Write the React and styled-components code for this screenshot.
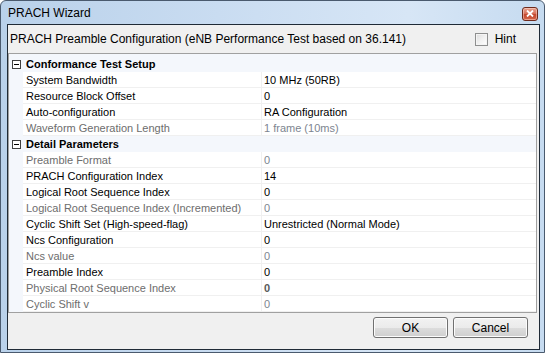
import React from 'react'
import styled, { createGlobalStyle } from 'styled-components'

const GlobalStyle = createGlobalStyle`
  html, body {
    margin: 0;
    padding: 0;
    overflow: hidden;
  }
  body {
    font-family: "Liberation Sans", Arial, sans-serif;
    background: #fff;
  }
`

const Window = styled.div`
  width: 545px;
  height: 353px;
  box-sizing: border-box;
  border: 1px solid #4a5a6e;
  border-radius: 6px 6px 0 0;
  background: linear-gradient(to right, #b9d1ea 0%, #c9dcf1 40%, #d7e6f6 75%, #c6dbf0 100%);
  display: flex;
  flex-direction: column;
`

const TitleBar = styled.div`
  height: 23px;
  flex: none;
  display: flex;
  align-items: center;
  justify-content: space-between;
  padding: 0 6px 0 7px;
  font-size: 12px;
  color: #000;
`

const CloseButton = styled.div`
  width: 16px;
  height: 14px;
  box-sizing: border-box;
  margin-top: 2px;
  border: 1px solid #6e2a1c;
  border-radius: 3px;
  background: linear-gradient(to bottom, #e8a592 0%, #d8735c 45%, #c4462c 55%, #d3664a 100%);
  display: flex;
  align-items: center;
  justify-content: center;
  box-shadow: inset 0 0 0 1px rgba(255, 220, 210, 0.5);
`

const Client = styled.div`
  flex: 1;
  margin: 0 4px 2px 6px;
  border: 1px solid #1f2a36;
  background: #f0f0f0;
  display: flex;
  flex-direction: column;
`

const HeaderRow = styled.div`
  height: 28px;
  flex: none;
  display: flex;
  align-items: center;
  justify-content: space-between;
  padding: 0 0 0 2px;
  font-size: 12px;
  color: #000;
`

const Hint = styled.label`
  display: flex;
  align-items: center;
  gap: 7px;
  margin-right: 23px;
  font-size: 12px;
`

const CheckBox = styled.span`
  width: 13px;
  height: 13px;
  box-sizing: border-box;
  border: 1px solid #8e8f8f;
  background: linear-gradient(135deg, #dcdcdc 0%, #f0f0f0 50%, #fff 100%);
  box-shadow: inset 0 0 0 1px #f4f4f4;
`

const Grid = styled.div`
  margin-right: 2px;
  padding-top: 2px;
  border: 1px solid #a0a0a0;
  background: #f4f7fc;
  display: flex;
  flex-direction: column;
  font-size: 11px;
`

const Row = styled.div`
  height: 16px;
  display: grid;
  grid-template-columns: 14px 239px 1fr;
  align-items: stretch;
`

const Margin = styled.div`
  display: flex;
  align-items: center;
  justify-content: center;
`

const Label = styled.div`
  background: #fff;
  border-bottom: 1px solid #f0f0f0;
  border-right: 1px solid #f0f0f0;
  padding-left: 3px;
  display: flex;
  align-items: center;
  white-space: nowrap;
  color: ${p => (p.disabled ? '#6d6d6d' : '#000')};
`

const Value = styled.div`
  background: #fff;
  border-bottom: 1px solid #f0f0f0;
  padding-left: 2px;
  display: flex;
  align-items: center;
  white-space: nowrap;
  color: ${p => (p.bold ? '#5a5a5a' : p.disabled ? '#7d8590' : '#000')};
  font-weight: ${p => (p.bold ? 'bold' : 'normal')};
`

const Category = styled.div`
  grid-column: 2 / 4;
  display: flex;
  align-items: center;
  padding-left: 3px;
  font-weight: bold;
  font-size: 11px;
  color: #000;
`

const Toggle = styled.span`
  width: 9px;
  height: 9px;
  box-sizing: border-box;
  border: 1px solid #404040;
  background: #fff;
  position: relative;
  &::after {
    content: '';
    position: absolute;
    left: 1px;
    right: 1px;
    top: 3px;
    height: 1px;
    background: #000;
  }
`

const Footer = styled.div`
  flex: 1;
  display: flex;
  justify-content: flex-end;
  align-items: flex-start;
  gap: 5px;
  padding: 4px 11px 0 0;
`

const Button = styled.button`
  width: 75px;
  height: 21px;
  box-sizing: border-box;
  border: 1px solid #707070;
  border-radius: 3px;
  background: linear-gradient(to bottom, #f2f2f2 0%, #ebebeb 50%, #dddddd 51%, #cfcfcf 100%);
  box-shadow: inset 0 0 0 1px #fcfcfc;
  font-family: "Liberation Sans", Arial, sans-serif;
  font-size: 12px;
  color: #000;
  padding: 0;
`

const sections = [
  {
    title: 'Conformance Test Setup',
    rows: [
      { label: 'System Bandwidth', value: '10 MHz (50RB)' },
      { label: 'Resource Block Offset', value: '0' },
      { label: 'Auto-configuration', value: 'RA Configuration' },
      { label: 'Waveform Generation Length', value: '1 frame (10ms)', disabled: true },
    ],
  },
  {
    title: 'Detail Parameters',
    rows: [
      { label: 'Preamble Format', value: '0', disabled: true },
      { label: 'PRACH Configuration Index', value: '14' },
      { label: 'Logical Root Sequence Index', value: '0' },
      { label: 'Logical Root Sequence Index (Incremented)', value: '0', disabled: true },
      { label: 'Cyclic Shift Set (High-speed-flag)', value: 'Unrestricted (Normal Mode)' },
      { label: 'Ncs Configuration', value: '0' },
      { label: 'Ncs value', value: '0', disabled: true },
      { label: 'Preamble Index', value: '0' },
      { label: 'Physical Root Sequence Index', value: '0', disabled: true, bold: true },
      { label: 'Cyclic Shift v', value: '0', disabled: true },
    ],
  },
]

function CloseIcon() {
  return (
    <svg width="8" height="7" viewBox="0 0 8 7">
      <path d="M1 0.5 L7 6.5 M7 0.5 L1 6.5" stroke="#fff" strokeWidth="1.8" />
    </svg>
  )
}

export default function App() {
  return (
    <>
      <GlobalStyle />
      <Window>
        <TitleBar>
          <span>PRACH Wizard</span>
          <CloseButton><CloseIcon /></CloseButton>
        </TitleBar>
        <Client>
          <HeaderRow>
            <span>PRACH Preamble Configuration (eNB Performance Test based on 36.141)</span>
            <Hint><CheckBox />Hint</Hint>
          </HeaderRow>
          <Grid>
            {sections.map(section => (
              <React.Fragment key={section.title}>
                <Row>
                  <Margin><Toggle /></Margin>
                  <Category>{section.title}</Category>
                </Row>
                {section.rows.map(row => (
                  <Row key={row.label}>
                    <Margin />
                    <Label disabled={row.disabled}>{row.label}</Label>
                    <Value disabled={row.disabled} bold={row.bold}>{row.value}</Value>
                  </Row>
                ))}
              </React.Fragment>
            ))}
          </Grid>
          <Footer>
            <Button>OK</Button>
            <Button>Cancel</Button>
          </Footer>
        </Client>
      </Window>
    </>
  )
}
